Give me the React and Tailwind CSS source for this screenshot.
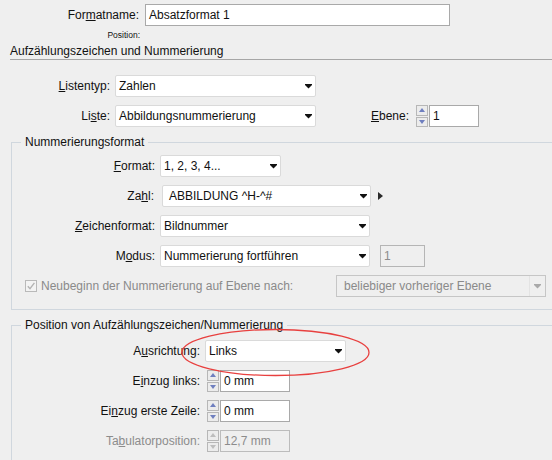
import React from 'react';

// Dropdown-Pfeil der Auswahlfelder
const Caret = ({ disabled }) => (
    <svg width="7" height="5" viewBox="0 0 7 5">
        <path d="M0 0h7v1L3.5 4.6 0 1z" fill={disabled ? '#a9a9a9' : '#111111'} />
    </svg>
);

const Select = ({ value, className = '' }) => (
    <div className={`flex items-center justify-between h-[22px] bg-white border border-[#dadada] rounded-[2px] pl-[3px] pr-[3px] ${className}`}>
        <span className="whitespace-nowrap">{value}</span>
        <Caret />
    </div>
);

const Spinner = ({ disabled }) => {
    const fill = disabled ? '#bdbdbd' : '#6f7fbf';
    return (
        <div className="flex flex-col gap-[1px] w-[12px] h-[22px]">
            <div className="flex-1 flex items-center justify-center border border-[#b7b7b7] bg-[#ececec]">
                <svg width="6" height="4" viewBox="0 0 6 4"><path d="M3 0L6 4H0z" fill={fill} /></svg>
            </div>
            <div className="flex-1 flex items-center justify-center border border-[#b7b7b7] bg-[#ececec]">
                <svg width="6" height="4" viewBox="0 0 6 4"><path d="M0 0h6L3 4z" fill={fill} /></svg>
            </div>
        </div>
    );
};

const NumberField = ({ value, disabled, className = '' }) => (
    <div className="flex items-center">
        <Spinner disabled={disabled} />
        <div
            className={`ml-[1px] h-[22px] flex items-center pl-[3px] border ${
                disabled ? 'border-[#bcbcbc] bg-[#efefef] text-[#8c8c8c]' : 'border-[#a9a9a9] bg-white'
            } ${className}`}
        >
            {value}
        </div>
    </div>
);

const Label = ({ children, className = '' }) => (
    <div className={`shrink-0 text-right whitespace-nowrap ${className}`}>{children}</div>
);

export default function App() {
    return (
        <div className="relative w-[552px] h-[460px] overflow-hidden bg-[#efefef] text-[12px] leading-[14px] text-[#111111] font-['Liberation_Sans',Arial,sans-serif]">
            {/* Formatname */}
            <div className="flex items-center h-[22px] mt-[4px]">
                <Label className="w-[145px] pr-[6px]">
                    For<u>m</u>atname:
                </Label>
                <div className="w-[305px] h-[22px] flex items-center bg-white border border-[#a9a9a9] pl-[3px]">
                    Absatzformat 1
                </div>
            </div>
            <div className="w-[140px] mt-[4px] h-[10px] leading-[10px] text-right text-[8.5px]">Position:</div>

            {/* Abschnittstitel */}
            <div className="ml-[10px] mt-[4px] pb-[1px] border-b border-[#a6a6a6]">
                Aufzählungszeichen und Nummerierung
            </div>

            <div className="flex items-center h-[22px] mt-[15px]">
                <Label className="w-[115px] pr-[5px]">
                    <u>L</u>istentyp:
                </Label>
                <Select value="Zahlen" className="w-[201px]" />
            </div>
            <div className="flex items-center h-[22px] mt-[8px]">
                <Label className="w-[115px] pr-[5px]">
                    Li<u>s</u>te:
                </Label>
                <Select value="Abbildungsnummerierung" className="w-[201px]" />
                <Label className="ml-[55px]">
                    <u>E</u>bene:
                </Label>
                <div className="ml-[7px]">
                    <NumberField value="1" className="w-[50px]" />
                </div>
            </div>

            {/* Nummerierungsformat */}
            <fieldset className="mt-[8px] ml-[11px] w-[580px] border border-[#d0d7de] pl-[9px] pb-[12px]">
                <legend className="px-[4px] leading-[14px]">Nummerierungsformat</legend>
                <div className="flex items-center h-[22px] mt-[6px]">
                    <Label className="w-[139px] pr-[5px]">
                        <u>F</u>ormat:
                    </Label>
                    <Select value="1, 2, 3, 4..." className="w-[121px]" />
                </div>
                <div className="flex items-center h-[22px] mt-[8px]">
                    <Label className="w-[141px] pr-[8px]">
                        Za<u>h</u>l:
                    </Label>
                    <Select value="ABBILDUNG ^H-^#" className="w-[209px] pl-[6px]" />
                    <svg className="ml-[7px]" width="5" height="8" viewBox="0 0 5 8">
                        <path d="M0 0L5 4L0 8z" fill="#2a2a2a" />
                    </svg>
                </div>
                <div className="flex items-center h-[22px] mt-[8px]">
                    <Label className="w-[139px] pr-[5px]">
                        <u>Z</u>eichenformat:
                    </Label>
                    <Select value="Bildnummer" className="w-[210px]" />
                </div>
                <div className="flex items-center h-[22px] mt-[8px]">
                    <Label className="w-[139px] pr-[5px]">
                        M<u>o</u>dus:
                    </Label>
                    <Select value="Nummerierung fortführen" className="w-[210px]" />
                    <div className="ml-[10px] w-[45px] h-[22px] flex items-center pl-[3px] border border-[#b5b5b5] text-[#8c8c8c]">
                        1
                    </div>
                </div>
                <div className="flex items-center h-[22px] mt-[8px] text-[#8a8a8a]">
                    <svg className="ml-[4px] shrink-0" width="12" height="12" viewBox="0 0 12 12">
                        <rect x="0.5" y="0.5" width="11" height="11" fill="#f3f3f3" stroke="#b9b9b9" />
                        <path d="M2.8 6.2L5 8.6L9.4 2.8" fill="none" stroke="#b3b3b3" strokeWidth="1.4" />
                    </svg>
                    <span className="ml-[4px] w-[295px] whitespace-nowrap">Neubeginn der Nummerierung auf Ebene nach:</span>
                    <div className="w-[210px] h-[22px] flex items-center border border-[#c6c6c6] pl-[7px]">
                        <span className="flex-1 whitespace-nowrap">beliebiger vorheriger Ebene</span>
                        <div className="w-[16px] h-full flex items-center justify-center border-l border-[#e3e3e3]">
                            <Caret disabled />
                        </div>
                    </div>
                </div>
            </fieldset>

            {/* Position von Aufzählungszeichen/Nummerierung */}
            <fieldset className="mt-[8px] ml-[11px] w-[580px] border border-[#d0d7de] pl-[9px] pb-[12px]">
                <legend className="px-[4px] leading-[14px]">Position von Aufzählungszeichen/Nummerierung</legend>
                <div className="flex items-center h-[22px] mt-[8px]">
                    <Label className="w-[184px] pr-[5px]">
                        A<u>u</u>srichtung:
                    </Label>
                    <Select value="Links" className="w-[141px]" />
                </div>
                <div className="flex items-center h-[22px] mt-[8px]">
                    <Label className="w-[186px] pr-[7px]">
                        E<u>i</u>nzug links:
                    </Label>
                    <NumberField value="0 mm" className="w-[70px]" />
                </div>
                <div className="flex items-center h-[22px] mt-[8px]">
                    <Label className="w-[186px] pr-[7px]">
                        Ei<u>n</u>zug erste Zeile:
                    </Label>
                    <NumberField value="0 mm" className="w-[70px]" />
                </div>
                <div className="flex items-center h-[22px] mt-[8px]">
                    <Label className="w-[186px] pr-[7px] text-[#8c8c8c]">
                        Ta<u>b</u>ulatorposition:
                    </Label>
                    <NumberField value="12,7 mm" disabled className="w-[70px]" />
                </div>
            </fieldset>

            {/* rote Markierung um "Ausrichtung" */}
            <svg className="absolute left-0 top-0 pointer-events-none" width="552" height="460">
                <ellipse cx="275.5" cy="352.5" rx="93.5" ry="23" fill="none" stroke="#e8403f" strokeWidth="1.3" />
            </svg>
        </div>
    );
}
